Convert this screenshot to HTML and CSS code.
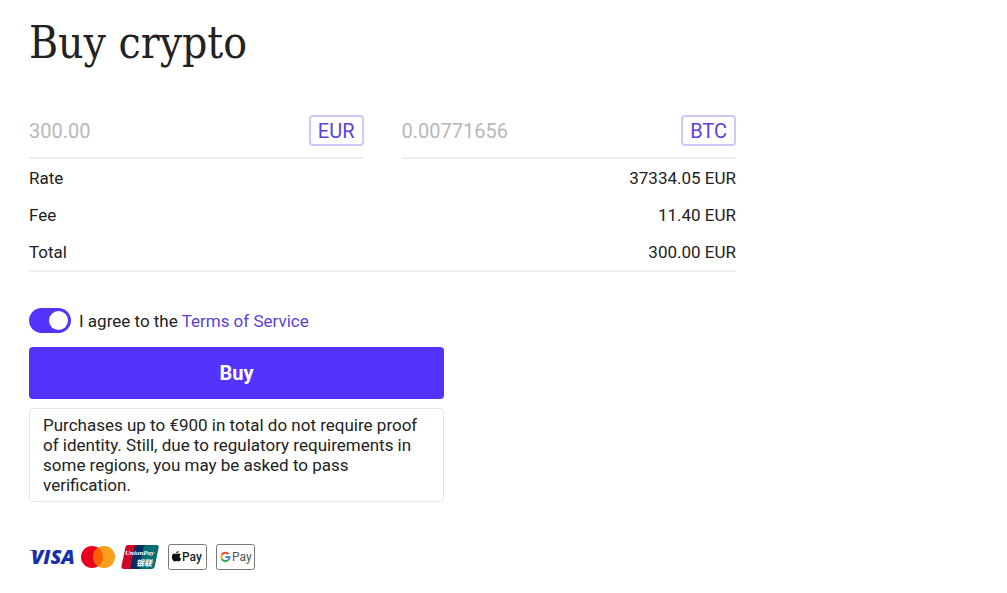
FILE: index.html
```html
<!DOCTYPE html>
<html lang="en">
<head>
    <meta charset="UTF-8">
    <meta name="viewport" content="width=device-width, initial-scale=1.0">
    <title>Buy crypto</title>
    <link rel="stylesheet" href="styles.css">
</head>
<body>

<main class="page">
    <h1>Buy crypto</h1>

    <form class="buy-form">
        <div class="amounts">
            <div class="field">
                <input type="text" id="pay" placeholder="300.00" aria-label="Amount in EUR">
                <button type="button" class="currency">EUR</button>
            </div>
            <div class="field">
                <input type="text" id="receive" placeholder="0.00771656" aria-label="Amount in BTC">
                <button type="button" class="currency">BTC</button>
            </div>
        </div>

        <table class="summary">
            <tr><th scope="row">Rate</th><td>37334.05 EUR</td></tr>
            <tr><th scope="row">Fee</th><td>11.40 EUR</td></tr>
            <tr><th scope="row">Total</th><td>300.00 EUR</td></tr>
        </table>

        <div class="checkout">
            <div class="agree">
                <input type="checkbox" id="terms" class="toggle" checked>
                <label for="terms">I agree to the <a href="#terms">Terms of Service</a></label>
            </div>
            <button type="submit" class="buy">Buy</button>
            <p class="note">Purchases up to €900 in total do not require proof of identity. Still, due to regulatory requirements in some regions, you may be asked to pass verification.</p>
        </div>
    </form>

    <!-- Payment methods -->
    <div class="payments">
        <svg class="visa" width="46" height="26" viewBox="0 0 46 26" role="img" aria-label="Visa">
            <path fill="#1a2fb0" d="M0 6h7l1.500 5C7 8.500 4 6.800 0 6.300z"/>
            <text x="2" y="20" class="visa-name">VISA</text>
        </svg>
        <svg class="mastercard" width="34" height="26" viewBox="0 0 34 26" role="img" aria-label="Mastercard">
            <circle cx="11" cy="13" r="11" fill="#eb001b"/>
            <circle cx="23" cy="13" r="11" fill="#f79e1b"/>
            <path fill="#ff5f00" d="M17 3.800a11 11 0 0 1 0 18.400a11 11 0 0 1 0-18.400z"/>
        </svg>
        <svg class="unionpay" width="38" height="26" viewBox="0 0 38 26" role="img" aria-label="UnionPay">
            <path fill="#d10429" d="M7 1h10l-5 24H3c-2 0-3-1.200-2.500-3L4.500 3C4.900 1.800 5.700 1 7 1z"/>
            <path fill="#022e64" d="M16 1h11l-5 24H12c-2 0-2.800-1.200-2.400-3l4-19c.3-1.200 1.200-2 2.400-2z"/>
            <path fill="#076f74" d="M26 1h9.500c1.700 0 2.600 1 2.200 2.600l-4 19c-.4 1.500-1.500 2.400-3 2.400H20.500c-1.700 0-2.300-1.200-2-2.700l4.200-19.500C23 1.700 24.400 1 26 1z"/>
            <text x="4" y="11" class="union-name">UnionPay</text>
            <text x="15" y="22" class="union-cn">银联</text>
        </svg>
        <svg class="apple-pay" width="39" height="26" viewBox="0 0 39 26" role="img" aria-label="Apple Pay">
            <rect x=".5" y=".5" width="38" height="25" rx="2" fill="#fff" stroke="#777"/>
            <path fill="#111" d="M10.800 9.600c1 0 1.500.5 1.900 1-1.600 1.200-1.300 3.500.4 4.200-.5 1.400-1.400 2.700-2.500 2.700-.8 0-1-.4-2-.4s-1.200.4-2 .4c-1.800 0-3.300-4-2.500-6.200.6-1.700 2.200-2 3.300-1.500 1 .4 1.200.4 2 .1.500-.2.900-.3 1.400-.3zM10.500 7c.1 1.300-1 2.500-2.300 2.400C8.100 8.200 9.200 7.100 10.500 7z"/>
            <text x="14" y="17" class="pay-name">Pay</text>
        </svg>
        <svg class="google-pay" width="39" height="26" viewBox="0 0 39 26" role="img" aria-label="Google Pay">
            <rect x=".5" y=".5" width="38" height="25" rx="2" fill="#fff" stroke="#777"/>
            <g fill="none" stroke-width="2">
                <path stroke="#ea4335" d="M12.500 10A4.200 4.200 0 0 0 5.800 11"/>
                <path stroke="#fbbc04" d="M5.800 11a4.200 4.200 0 0 0 0 4"/>
                <path stroke="#34a853" d="M5.800 15a4.200 4.200 0 0 0 6.400 1"/>
                <path stroke="#4285f4" d="M12.200 16a4.200 4.200 0 0 0 1.400-3H9.500"/>
            </g>
            <text x="16" y="17" class="gpay-name">Pay</text>
        </svg>
    </div>
</main>

</body>
</html>
```
FILE: styles.css
```css
* {
    box-sizing: border-box;
}

body {
    margin: 0;
    font-family: Roboto, "Liberation Sans", sans-serif;
    font-size: 17px;
    line-height: 20px;
    color: #222;
    background: #fff;
}

.page {
    max-width: 765px;
    padding: 17px 29px 24px;
}

h1 {
    margin: 0 0 43px;
    font-family: "DejaVu Serif Condensed", "DejaVu Serif", serif;
    font-size: 44px;
    line-height: 52px;
    font-weight: normal;
}

input, button {
    font: inherit;
}

a {
    color: #5b3fd6;
    text-decoration: none;
}

.amounts {
    display: grid;
    grid-template-columns: 1fr 1fr;
    gap: 38px;
}

.field {
    display: flex;
    align-items: center;
    padding: 3px 0 11px;
    border-bottom: 2px solid #eee;
}

.field input {
    flex: 1;
    min-width: 0;
    padding: 0;
    border: none;
    outline: none;
    font-size: 20px;
    line-height: 24px;
    background: none;
}

.field input::placeholder {
    color: #b8b8b8;
}

.currency {
    padding: 3px 7px 1px;
    border: 2px solid #cfc6fa;
    border-radius: 4px;
    font-size: 20px;
    line-height: 23px;
    color: #5b3fd6;
    background: #fff;
}

.summary {
    width: 100%;
    border-collapse: collapse;
    border-bottom: 2px solid #eee;
}

.summary th,
.summary td {
    padding: 9px 0 8px;
    font-weight: normal;
    text-align: left;
}

.summary td {
    text-align: right;
}

.checkout {
    max-width: 415px;
    margin-top: 36px;
}

.agree {
    display: flex;
    align-items: center;
    gap: 8px;
    margin-bottom: 14px;
}

.toggle {
    appearance: none;
    display: flex;
    align-items: center;
    width: 42px;
    height: 25px;
    margin: 0;
    padding: 3px;
    border-radius: 13px;
    background: #bbb;
}

.toggle::before {
    content: "";
    width: 19px;
    height: 19px;
    border-radius: 50%;
    background: #fff;
}

.toggle:checked {
    justify-content: flex-end;
    background: #5533ff;
}

.buy {
    width: 100%;
    padding: 14px;
    border: none;
    border-radius: 4px;
    font-size: 20px;
    line-height: 24px;
    font-weight: bold;
    color: #fff;
    background: #5533ff;
}

.note {
    margin: 9px 0 0;
    padding: 6px 13px;
    border: 1px solid #e6e6e6;
    border-radius: 4px;
}

.payments {
    display: flex;
    align-items: center;
    flex-wrap: wrap;
    gap: 6px;
    margin-top: 42px;
}

.apple-pay,
.google-pay {
    margin-left: 3px;
}

.visa-name {
    font-family: "Open Sans", sans-serif;
    font-size: 20px;
    font-weight: 800;
    font-style: italic;
    fill: #1a2fb0;
}

.union-name,
.union-cn {
    fill: #fff;
    font-weight: bold;
    font-style: italic;
}

.union-name {
    font-family: "Liberation Serif", serif;
    font-size: 7px;
}

.union-cn {
    font-family: "Noto Sans CJK SC", sans-serif;
    font-size: 8px;
}

.pay-name,
.gpay-name {
    font-size: 12px;
    fill: #222;
}

.pay-name {
    font-weight: 500;
}

.gpay-name {
    fill: #555;
}
```
